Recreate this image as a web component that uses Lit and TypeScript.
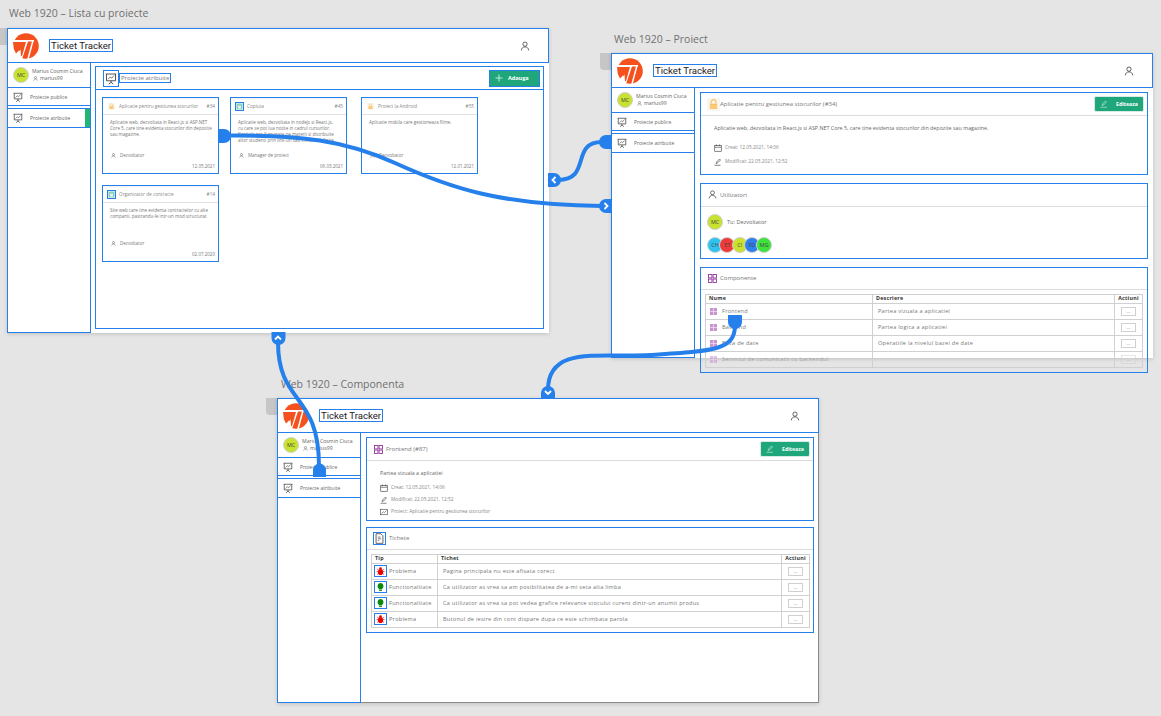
import { LitElement, css, html, svg } from 'lit'
import { customElement } from 'lit/decorators.js'

const presentation = html`<svg class="ic" viewBox="0 0 16 16" fill="none" stroke="#333" stroke-width="1.1"><path d="M1 2h14M2 2v9h12V2M8 11v2M8 13l-3 2.5M8 13l3 2.5"/><path d="M4 9l3-3 2 1.5L12 4" stroke-width=".9"/></svg>`
const user = html`<svg class="ic" viewBox="0 0 16 16" fill="none" stroke="#333" stroke-width="1.2"><circle cx="8" cy="5" r="3.4"/><path d="M2 15c.6-3.8 2.8-5.6 6-5.6s5.4 1.8 6 5.6"/></svg>`
const lock = html`<svg class="ic" viewBox="0 0 16 16"><rect width="16" height="16" fill="#f9f6ef"/><path d="M5 7V5a3 3 0 0 1 6 0v2" fill="none" stroke="#f7bd5c" stroke-width="1.3"/><rect x="3.5" y="7" width="9" height="6.5" fill="#f8c266"/><path d="M3.5 9.5h9M3.5 11.5h9" stroke="#fde3b0" stroke-width=".6"/></svg>`
const sheet = html`<svg class="ic" viewBox="0 0 16 16"><rect x="1" y="1" width="14" height="14" fill="#8fd0bd"/><rect x="5" y="6" width="6" height="7" fill="#e8f6f1"/></svg>`
const calendar = html`<svg class="ic" viewBox="0 0 16 16" fill="none" stroke="#333" stroke-width="1.2"><rect x="1.5" y="3" width="13" height="11.5"/><path d="M1.5 6.5h13M5 1v3M11 1v3"/></svg>`
const pencil = html`<svg class="ic" viewBox="0 0 16 16" fill="none" stroke="#333" stroke-width="1.2"><path d="M4 11l1-3 6-6 2 2-6 6zM1 14.5h12"/></svg>`
const chart = html`<svg class="ic" viewBox="0 0 16 16" fill="none" stroke="#333" stroke-width="1.1"><rect x="1" y="2.5" width="14" height="11"/><path d="M3 11l3.5-3.5 2.5 1.5L13 5"/></svg>`
const grid = html`<svg class="ic" viewBox="0 0 16 16" fill="none" stroke="#8e2a96" stroke-width="1.5"><rect x="1" y="1" width="6" height="6"/><rect x="9" y="1" width="6" height="6"/><rect x="1" y="9" width="6" height="6"/><rect x="9" y="9" width="6" height="6"/></svg>`
const gridSoft = html`<svg class="ic" viewBox="0 0 16 16"><rect width="16" height="16" fill="#c995cf"/><path d="M8 0v16M0 8h16" stroke="#f4e8f5" stroke-width="1.5"/></svg>`
const doc = html`<svg class="ic" viewBox="0 0 16 16" fill="none" stroke="#444" stroke-width="1.2"><path d="M3 1h7l3 3v11H3z"/><path d="M5.5 6h4M5.5 8.5h5M5.5 11h2" stroke-width="1"/></svg>`
const bug = html`<svg class="ic" viewBox="0 0 16 16"><path d="M2 4l3 3M14 4l-3 3M1 9h3M15 9h-3M2 14l3-2M14 14l-3-2" stroke="#e60000" stroke-width="1.3"/><circle cx="8" cy="4" r="2.5" fill="#e60000"/><ellipse cx="8" cy="10" rx="4.5" ry="5" fill="#e60000"/></svg>`
const bulb = html`<svg class="ic" viewBox="0 0 16 16"><path d="M8 1a5.5 5.5 0 0 0-3 10v1.5h6V11A5.5 5.5 0 0 0 8 1z" fill="#0a8a0a"/><rect x="5.5" y="13.3" width="5" height="1.6" fill="#0a8a0a"/></svg>`
const plus = html`<svg class="ic" viewBox="0 0 16 16" stroke="#bfe9da" stroke-width="2"><path d="M8 1v14M1 8h14"/></svg>`
const editIcon = html`<svg class="ic" viewBox="0 0 16 16" fill="none" stroke="#d8f3ea" stroke-width="1.2"><path d="M4 11l1-3 6-6 2 2-6 6zM1 14.5h13"/></svg>`
const logo = html`<svg class="logo" viewBox="0 0 26 26">
  <circle cx="13" cy="13" r="12.8" fill="#f4511e"/>
  <path d="M0 7h15.5L9 26H0zM2 11h7.5L7.5 17l-1.5 1-.5-3-3.5 1z" fill="#fff" fill-rule="evenodd"/>
  <path d="M0 7.8h21M20 7.5L15 26" fill="none" stroke="#fff" stroke-width="1.5"/>
  <path d="M0 9h13l-3.8 13.5-1.2 1L7.5 16 3 20.5 0.8 16z" fill="#f4511e"/>
</svg>`

const cards = [
  { icon: lock, boxed: false, title: 'Aplicatie pentru gestiunea stocurilor', id: '#34', text: 'Aplicatie web, dezvoltata in React.js si ASP.NET\nCore 5, care tine evidenta stocurilor din depozite\nsau magazine.', role: 'Dezvoltator', date: '12.05.2021' },
  { icon: sheet, boxed: true, title: 'Copiuta', id: '#45', text: 'Aplicatie web, dezvoltata in nodejs si React.js,\ncu care se pot lua notite in cadrul cursurilor.\nNotitele pot fi grupate pe materii si distribuite\naltor studenti prin link-uri sau invitatii definite.', role: 'Manager de proiect', date: '06.03.2021' },
  { icon: lock, boxed: false, title: 'Proiect la Android', id: '#55', text: 'Aplicatie mobila care gestioneaza filme.', role: 'Dezvoltator', date: '12.01.2021' },
  { icon: sheet, boxed: true, title: 'Organizator de contracte', id: '#14', text: 'Site web care tine evidenta contractelor cu alte\ncompanii, pastrandu-le intr-un mod structurat', role: 'Dezvoltator', date: '02.07.2020' },
]

const components = [
  ['Frontend', 'Partea vizuala a aplicatiei'],
  ['Backend', 'Partea logica a aplicatiei'],
  ['Baza de date', 'Operatiile la nivelul bazei de date'],
  ['Serviciul de comunicatii cu backendul', ''],
]

const tickets = [
  { bug: true, type: 'Problema', text: 'Pagina principala nu este afisata corect' },
  { bug: false, type: 'Functionalitate', text: 'Ca utilizator as vrea sa am posibilitatea de a-mi seta alta limba' },
  { bug: false, type: 'Functionalitate', text: 'Ca utilizator as vrea sa pot vedea grafice relevante stocului curent dintr-un anumit produs' },
  { bug: true, type: 'Problema', text: 'Butonul de iesire din cont dispare dupa ce este schimbata parola' },
]

const team = [
  ['CH', 'c-cyan'],
  ['ET', 'c-red'],
  ['CI', 'c-lime'],
  ['FD', 'c-blue'],
  ['MG', 'c-green'],
]

@customElement('app-root')
export class AppRoot extends LitElement {

  static styles = css`
    :host {
      display: block;
      font-family: "Open Sans", "Noto Sans", sans-serif;
      color: #666;
    }

    .canvas {
      position: relative;
      width: 1161px;
      height: 716px;
      overflow: hidden;
      background: #e5e5e5;
    }

    .ic { display: block; flex-shrink: 0; }

    .window { position: absolute; width: 542px; }
    .w-list { left: 7px; top: 6px; }
    .w-project { left: 611px; top: 32px; }
    .w-component { left: 277px; top: 377px; }

    .label {
      height: 22px;
      font-size: 10.5px;
      line-height: 14px;
      color: #707070;
      white-space: nowrap;
    }
    .w-list .label { padding-left: 2px; }
    .w-project .label { padding-left: 3px; height: 21px; }
    .w-component .label { padding-left: 4px; height: 21px; }

    .tab {
      position: absolute;
      left: -11px;
      top: 21px;
      width: 20px;
      height: 17px;
      background: #c6c6c6;
      border-radius: 0 0 0 4px;
    }
    .w-list .tab { top: 22px; }

    .frame {
      position: relative;
      height: 305px;
      background: #fff;
      box-shadow: 0 1px 4px rgba(0, 0, 0, 0.16);
      display: flex;
      flex-direction: column;
    }
    .w-component .frame {
      box-shadow: inset -1px -1px 0 #8a8a8a, 0 1px 4px rgba(0, 0, 0, 0.16);
    }

    .header {
      height: 35px;
      flex-shrink: 0;
      box-sizing: border-box;
      border: 1px solid #2680eb;
      display: flex;
      align-items: center;
      padding-left: 5px;
      padding-right: 18px;
    }
    .logo { width: 26px; height: 26px; flex-shrink: 0; }
    .brand {
      margin-left: 10px;
      padding: 0 1px;
      border: 1px solid #2680eb;
      font-family: Roboto, sans-serif;
      font-size: 9.6px;
      line-height: 11px;
      color: #222;
      white-space: nowrap;
    }
    .account { margin-left: auto; width: 10px; }
    .account .ic { width: 10px; height: 10px; }

    .body { flex: 1; display: flex; min-height: 0; }

    .sidebar {
      width: 84px;
      flex-shrink: 0;
      box-sizing: border-box;
      border: 1px solid #2680eb;
      border-top: none;
    }
    .profile {
      height: 25px;
      box-sizing: border-box;
      display: flex;
      align-items: center;
      gap: 3px;
      padding-left: 5px;
      border-bottom: 1px solid #2680eb;
    }
    .who { font-size: 5.2px; line-height: 7px; white-space: nowrap; }
    .who .handle { display: flex; align-items: center; gap: 2px; padding-left: 1px; }
    .who .ic { width: 5px; height: 5px; }
    .nav {
      position: relative;
      height: 18px;
      box-sizing: border-box;
      display: flex;
      align-items: center;
      gap: 7px;
      padding-left: 5px;
      border-bottom: 1px solid #2680eb;
      font-size: 5px;
      white-space: nowrap;
    }
    .nav .ic { width: 10px; height: 10px; }
    .nav + .nav { margin-top: 2px; border-top: 1px solid #2680eb; height: 20px; }
    .strip {
      position: absolute;
      right: 0;
      top: 0;
      bottom: 0;
      width: 5px;
      background: #22b573;
    }

    .avatar {
      width: 16px;
      height: 16px;
      flex-shrink: 0;
      box-sizing: border-box;
      border: 1px solid #d0d0d0;
      border-radius: 50%;
      display: flex;
      align-items: center;
      justify-content: center;
      font-size: 5.4px;
      color: #444;
      background: #c9e22f;
    }
    .c-cyan { background: #2fc4ef; }
    .c-red { background: #ef3a3a; }
    .c-lime { background: #c9e22f; }
    .c-blue { background: #2f80ed; }
    .c-green { background: #3fe23a; }

    .main {
      flex: 1;
      min-width: 0;
      padding: 4px 5px 4px 5px;
      display: flex;
      flex-direction: column;
      gap: 8px;
    }
    .w-list .main { padding: 3px 5px 4px 4px; }
    .w-component .main { gap: 6px; }

    .panel { box-sizing: border-box; border: 1px solid #2680eb; flex-shrink: 0; }
    .panel-full { flex: 1; }
    .panel-info { height: 82.5px; }
    .w-component .panel-info { height: 83.5px; }
    .panel-users { height: 76px; }
    .panel-table { height: 106px; }

    .panel-head {
      height: 23px;
      box-sizing: border-box;
      display: flex;
      align-items: center;
      gap: 3px;
      padding: 0 3px 0 7px;
      border-bottom: 1.5px solid #dcdcdc;
      font-size: 6px;
      color: #777;
      white-space: nowrap;
    }
    .panel-table .panel-head { height: 22px; }
    .panel-head .ic { width: 9px; height: 9px; }
    .panel-head.list-head { border-bottom: 1px solid #2680eb; gap: 0; }
    .list-head .boxed .ic { width: 12px; height: 13px; }
    .lock-box { margin: 0 -3px 0 -1px; }
    .panel-head .lock-box .ic { width: 13px; height: 13px; }
    .boxed { border: 1px solid #2680eb; padding: 1px; display: flex; }
    .panel-table .panel-head .boxed { padding: 0; margin-left: -1px; }
    .panel-table .panel-head .boxed .ic { width: 11px; height: 11px; }
    .boxed-text { border: 1px solid #2680eb; padding: 0 1px; line-height: 8px; }
    .push { margin-left: auto; }

    .btn {
      width: 50px;
      height: 15.5px;
      flex-shrink: 0;
      box-sizing: border-box;
      padding-left: 5px;
      background: #1fa67a;
      border: 1px solid #d6ece4;
      border-radius: 2px;
      display: flex;
      align-items: center;
      gap: 8px;
      color: #fff;
      font-size: 5.2px;
      font-weight: 700;
    }
    .btn .ic { width: 8px; height: 8px; }
    .btn-add {
      width: 51px;
      height: 17px;
      gap: 5px;
      font-size: 5.5px;
      border: 1px solid #2680eb;
      border-radius: 0;
    }

    .grid {
      display: grid;
      grid-template-columns: 128px 131px 117px;
      row-gap: 11px;
      padding: 7px 0 0 6px;
    }
    .card {
      width: 117px;
      height: 77px;
      box-sizing: border-box;
      border: 1px solid #2680eb;
      display: flex;
      flex-direction: column;
      font-size: 4.5px;
      line-height: 6px;
      color: #777;
    }
    .card-head {
      height: 17px;
      flex-shrink: 0;
      box-sizing: border-box;
      display: flex;
      align-items: center;
      gap: 3px;
      padding: 0 3px 0 4px;
      background: linear-gradient(#f0f0f0, #fff 2px);
      border-bottom: 1px solid #e2e2e2;
      font-size: 4.7px;
      color: #888;
      white-space: nowrap;
    }
    .card-head .ic { width: 7px; height: 7px; }
    .card-head .boxed { padding: 0; }
    .card-head .lock { margin-left: 1px; margin-right: 1px; }
    .card-text { padding: 4px 3px 0 7px; flex: 1; white-space: pre; overflow: hidden; }
    .role {
      display: flex;
      align-items: center;
      gap: 4px;
      padding-left: 8px;
      white-space: nowrap;
    }
    .role .ic { width: 5px; height: 5px; }
    .date { text-align: right; padding: 5px 3px 4px 0; }

    .info-text { padding: 9px 13px 0; font-size: 5.35px; line-height: 7px; white-space: nowrap; }
    .meta { padding: 11px 0 0 13px; display: flex; flex-direction: column; gap: 5px; }
    .meta-row { display: flex; align-items: center; gap: 3px; font-size: 4.8px; line-height: 9px; color: #888; white-space: nowrap; }
    .meta-row .ic { width: 8px; height: 8px; }
    .w-component .meta { padding-top: 6px; gap: 3px; }

    .me {
      display: flex;
      align-items: center;
      gap: 4px;
      padding: 7px 0 0 6px;
      font-size: 5.6px;
    }
    .team { display: flex; padding: 7px 0 0 6px; }
    .team .avatar + .avatar { margin-left: -3.7px; }

    table {
      border-collapse: collapse;
      table-layout: fixed;
      margin: 4px 0 0 4px;
      width: 438px;
      font-size: 5.6px;
      letter-spacing: 0.25px;
      color: #777;
    }
    th {
      height: 8px;
      padding: 0 3px;
      text-align: left;
      font-size: 5.3px;
      font-weight: 700;
      color: #333;
    }
    td { height: 15px; padding: 0 5px; white-space: nowrap; overflow: hidden; }
    th, td { box-sizing: border-box; border: 1px solid #d0d0d0; line-height: 7px; }
    tr { height: 16px; }
    thead tr { height: 9px; }
    .col-name { width: 167px; }
    .col-type { width: 66px; }
    .col-ticket { width: 344px; }
    .col-act { width: 28px; text-align: center; padding: 0; }
    .cell { display: flex; align-items: center; gap: 5px; margin-left: -1px; }
    .cell .ic { width: 7px; height: 7px; }
    .cell .boxed { padding: 0 1px; }
    .cell .boxed .ic { width: 9px; height: 10px; }
    .cell-ticket { gap: 2px; margin-left: -3px; }
    .faded { opacity: 0.55; }
    .dots {
      width: 15px;
      height: 9px;
      margin: 0 auto;
      box-sizing: border-box;
      border: 1px solid #d0d0d0;
      font-size: 5px;
      line-height: 6px;
      letter-spacing: 0;
      text-align: center;
      color: #888;
    }

    .wires { position: absolute; left: 0; top: 0; width: 1161px; height: 716px; pointer-events: none; }
  `

  private shell(active: boolean, content: unknown) {
    return html`
      <div class="frame">
        <div class="header">
          ${logo}
          <div class="brand">Ticket Tracker</div>
          <div class="account">${user}</div>
        </div>
        <div class="body">
          <div class="sidebar">
            <div class="profile">
              <div class="avatar">MC</div>
              <div class="who">
                <div>Marius Cosmin Ciuca</div>
                <div class="handle">${user}<span>marius99</span></div>
              </div>
            </div>
            <div class="nav">${presentation}<span>Proiecte publice</span></div>
            <div class="nav">${presentation}<span>Proiecte atribuite</span>${active ? html`<div class="strip"></div>` : ''}</div>
          </div>
          <div class="main">${content}</div>
        </div>
      </div>
    `
  }

  private renderCard(c: (typeof cards)[number]) {
    return html`
      <div class="card">
        <div class="card-head">
          <div class=${c.boxed ? 'boxed' : 'lock'}>${c.icon}</div>
          <span>${c.title}</span>
          <span class="push">${c.id}</span>
        </div>
        <div class="card-text">${c.text}</div>
        <div class="role">${user}<span>${c.role}</span></div>
        <div class="date">${c.date}</div>
      </div>
    `
  }

  private listPage() {
    return html`
      <div class="panel panel-full">
        <div class="panel-head list-head">
          <div class="boxed">${presentation}</div>
          <div class="boxed-text">Proiecte atribuite</div>
          <div class="btn btn-add push">${plus}<span>Adauga</span></div>
        </div>
        <div class="grid">${cards.map(c => this.renderCard(c))}</div>
      </div>
    `
  }

  private projectPage() {
    return html`
      <div class="panel panel-info">
        <div class="panel-head">
          <div class="lock-box">${lock}</div>
          <span>Aplicatie pentru gestiunea stocurilor (#34)</span>
          <div class="btn push">${editIcon}<span>Editeaza</span></div>
        </div>
        <div class="info-text">Aplicatie web, dezvoltata in React.js si ASP.NET Core 5, care tine evidenta stocurilor din depozite sau magazine.</div>
        <div class="meta">
          <div class="meta-row">${calendar}<span>Creat: 12.05.2021, 14:06</span></div>
          <div class="meta-row">${pencil}<span>Modificat: 22.05.2021, 12:52</span></div>
        </div>
      </div>
      <div class="panel panel-users">
        <div class="panel-head">${user}<span>Utilizatori</span></div>
        <div class="me"><div class="avatar">MC</div><span>Tu: Dezvoltator</span></div>
        <div class="team">${team.map(([name, color]) => html`<div class="avatar ${color}">${name}</div>`)}</div>
      </div>
      <div class="panel panel-table">
        <div class="panel-head">${grid}<span>Componente</span></div>
        <table>
          <thead><tr><th class="col-name">Nume</th><th>Descriere</th><th class="col-act">Actiuni</th></tr></thead>
          <tbody>
            ${components.map(([name, text], i) => html`
              <tr class=${i === 3 ? 'faded' : ''}>
                <td><div class="cell">${gridSoft}<span>${name}</span></div></td>
                <td>${text}</td>
                <td class="col-act"><div class="dots">...</div></td>
              </tr>
            `)}
          </tbody>
        </table>
      </div>
    `
  }

  private componentPage() {
    return html`
      <div class="panel panel-info">
        <div class="panel-head">
          ${grid}
          <span>Frontend (#87)</span>
          <div class="btn push">${editIcon}<span>Editeaza</span></div>
        </div>
        <div class="info-text">Partea vizuala a aplicatiei</div>
        <div class="meta">
          <div class="meta-row">${calendar}<span>Creat: 12.05.2021, 14:06</span></div>
          <div class="meta-row">${pencil}<span>Modificat: 22.05.2021, 12:52</span></div>
          <div class="meta-row">${chart}<span>Proiect: Aplicatie pentru gestiunea stocurilor</span></div>
        </div>
      </div>
      <div class="panel panel-table">
        <div class="panel-head"><div class="boxed">${doc}</div><span>Tichete</span></div>
        <table>
          <thead><tr><th class="col-type">Tip</th><th class="col-ticket">Tichet</th><th class="col-act">Actiuni</th></tr></thead>
          <tbody>
            ${tickets.map(t => html`
              <tr>
                <td><div class="cell cell-ticket"><div class="boxed">${t.bug ? bug : bulb}</div><span>${t.type}</span></div></td>
                <td>${t.text}</td>
                <td class="col-act"><div class="dots">...</div></td>
              </tr>
            `)}
          </tbody>
        </table>
      </div>
    `
  }

  private wires() {
    return svg`
      <g fill="none" stroke="#2680eb" stroke-width="4" stroke-linecap="round">
        <path d="M228 135.5C300 135 345 140 395 163C450 188 500 205 602 206" />
        <path d="M558 180C592 180 570 142 602 142" />
        <path d="M278 342C278 405 319 392 319 466" />
        <path d="M548 390C548 345 600 358 650 355C715 351 735 350 735 325" />
      </g>
      <g fill="#2680eb">
        <path d="M218 129h6a7 7 0 0 1 0 14h-6z" />
        <path d="M612 135h-6a7 7 0 0 0 0 14h6z" />
        <path d="M612 199h-6a7 7 0 0 0 0 14h6z" />
        <path d="M548 173h6a7 7 0 0 1 0 14h-6z" />
        <path d="M271.5 332h14v6a7 7 0 0 1-14 0z" />
        <path d="M541 399h14v-6a7 7 0 0 0-14 0z" />
        <path d="M313 477v-7a6.5 6.5 0 0 1 13 0v7z" />
        <path d="M728 315h14v7a7 7 0 0 1-14 0z" />
      </g>
      <g fill="none" stroke="#fff" stroke-width="1.8">
        <path d="M604.5 203l3 3-3 3" />
        <path d="M555.5 177l-3 3 3 3" />
        <path d="M275 339.5l3-3 3 3" />
        <path d="M545 391l3 3 3-3" />
      </g>
    `
  }

  render() {
    return html`
      <div class="canvas">
        <div class="window w-list">
          <div class="label">Web 1920 – Lista cu proiecte</div>
          <div class="tab"></div>
          ${this.shell(true, this.listPage())}
        </div>
        <div class="window w-project">
          <div class="label">Web 1920 – Proiect</div>
          <div class="tab"></div>
          ${this.shell(false, this.projectPage())}
        </div>
        <div class="window w-component">
          <div class="label">Web 1920 – Componenta</div>
          <div class="tab"></div>
          ${this.shell(false, this.componentPage())}
        </div>
        <svg class="wires" viewBox="0 0 1161 716">${this.wires()}</svg>
      </div>
    `
  }
}

declare global {
  interface HTMLElementTagNameMap {
    'app-root': AppRoot
  }
}
